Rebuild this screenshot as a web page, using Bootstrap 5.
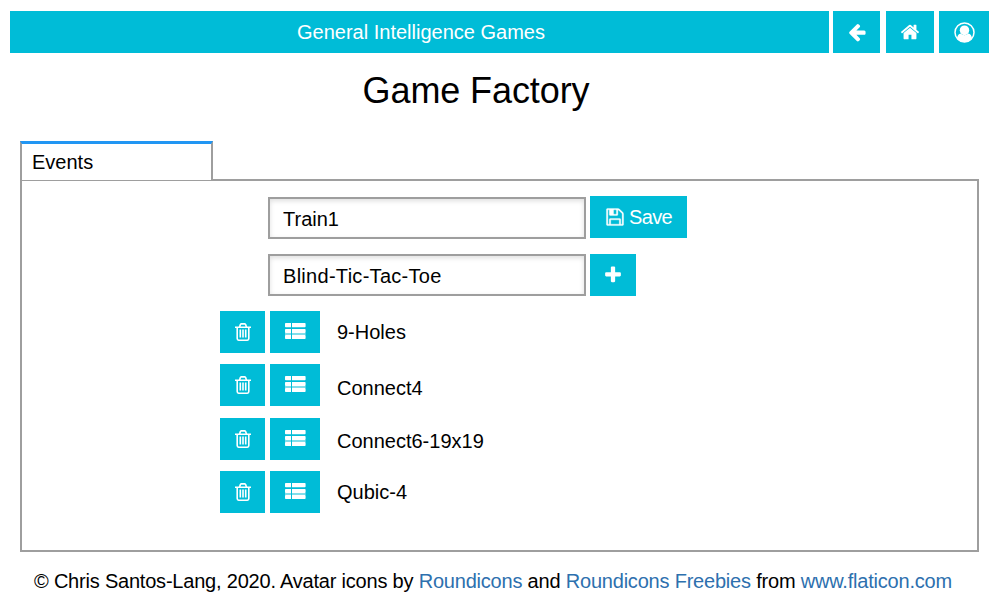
<!DOCTYPE html>
<html lang="en">
<head>
<meta charset="utf-8">
<meta name="viewport" content="width=device-width, initial-scale=1">
<title>Game Factory</title>
<link href="https://cdn.jsdelivr.net/npm/bootstrap@5.3.0/dist/css/bootstrap.min.css" rel="stylesheet">
<style>
body{font-family:"Liberation Sans",Arial,sans-serif;font-size:20px;line-height:30px;color:#000;background:#fff;height:606px;overflow:hidden}
a{color:#2d70ae;text-decoration:none}
svg{display:block;fill:#fff;flex:none}
.btn{--bs-btn-font-size:20px;--bs-btn-bg:#00bcd7;--bs-btn-color:#fff;--bs-btn-hover-bg:#00a5bd;--bs-btn-hover-color:#fff;--bs-btn-border-width:0;--bs-btn-border-radius:0;--bs-btn-padding-x:0;--bs-btn-padding-y:0;height:42px;line-height:42px;display:flex;align-items:center;justify-content:center;flex:none}
.topbar{padding:11px 9px 0 10px;height:53px}
.brand-strip{background:#00bcd7;color:#fff;width:819px;height:42px;line-height:42px;padding-left:3px;margin-right:4px}
.w-back{width:47px;margin-right:6px;padding-left:1px}.w-home{width:48px;margin-right:5px}.w-user{width:50px}
h1{font-size:36px;line-height:44px;width:952px;margin:16px 0 0;font-weight:400;letter-spacing:-.1px}
.events{margin:28px 19px 0 20px}
.nav-tabs{--bs-nav-tabs-border-width:0;height:38px}
.nav-tabs .nav-link{width:193px;padding:3px 0 0 10px;border:2px solid #9e9e9e;border-radius:0;line-height:30px;text-align:left}
.nav-tabs .nav-link.active{background:#fff;color:#000;border-color:#2196f3 #9e9e9e #9e9e9e;border-top-width:3px;border-bottom-width:1px;height:40px;margin-bottom:-2px;padding:0 0 1px 10px;position:relative}
.panel{border:2px solid #9e9e9e;height:373px;padding:15px 0 0 198px}
.field{width:318px;height:42px;border:2px solid #9e9e9e;border-radius:0;font-size:20px;line-height:36px;padding:2px 13px 0;color:#000;box-shadow:inset 0 2px 5px rgba(0,0,0,.13)}
.event-name{margin-top:1px;padding-top:3px}
.game-name{letter-spacing:.29px}
.entry{padding-left:48px;gap:4px;height:43px;margin-bottom:15px}
.entry.picker{margin-bottom:14px}
.w-save{width:97px;gap:4px;padding-left:0}
.w-save span{letter-spacing:-.7px}
.w-add{width:46px}
.game{height:42px;margin-bottom:11px}
.game.tall{margin-bottom:12px}
.game span{margin-left:17px;line-height:42px}
.drop-1{padding-top:3px}.drop-2{padding-top:2px}
.w-trash{width:45px;margin-right:5px}.w-list{width:50px}
.w-list svg{margin-bottom:2px}
footer{padding:14px 0 0 34px;white-space:nowrap;letter-spacing:-.205px}
</style>
<script src="https://cdn.jsdelivr.net/npm/bootstrap@5.3.0/dist/js/bootstrap.bundle.min.js"></script>
</head>
<body>
<svg width="0" height="0" class="d-none">
  <symbol id="trash" viewBox="0 0 16 18"><path fill="none" stroke="#fff" stroke-width="1.6" d="M0 4.200h16M4.500 4 5.300 1.800q.2-.9.900-.9h3.600q.7 0 .9.900L11.500 4M2.200 4v11.600q0 1.600 1.400 1.600h8.800q1.400 0 1.400-1.600V4M5.300 6.500v8M8 6.500v8M10.700 6.500v8"/></symbol>
  <symbol id="list" viewBox="0 0 21 16"><path d="M.8 0H6v4.300H.8Q0 4.300 0 3.500V.8Q0 0 .8 0zM7 0h12.800q.8 0 .8.8v2.700q0 .8-.8.8H7zM.8 6H6v4H.8Q0 10 0 9.200V6.800Q0 6 .8 6zM7 6h12.800q.8 0 .8.8v2.400q0 .8-.8.8H7zM.8 12H6v4H.8Q0 16 0 15.200v-2.400q0-.8.8-.8zM7 12h12.800q.8 0 .8.8v2.400q0 .8-.8.8H7z"/><path opacity=".5" d="M0 10h6v2H0zM7 10h13.600v2H7z"/></symbol>
</svg>

<header class="topbar d-flex">
  <div class="brand-strip text-center">General Intelligence Games</div>
  <button class="btn w-back" aria-label="Back"><svg width="20" height="20" viewBox="0 0 1792 1792"><path d="M1664 896v128q0 53-32.500 90.500t-84.500 37.500h-704l293 294q38 36 38 90t-38 90l-75 76q-37 37-90 37-52 0-91-37l-651-652q-37-37-37-90 0-52 37-91l651-650q38-38 91-38 52 0 90 38l75 74q38 38 38 91t-38 91l-293 293h704q52 0 84.500 37.500t32.500 90.500z"/></svg></button>
  <button class="btn w-home" aria-label="Home"><svg width="20" height="20" viewBox="0 0 1792 1792"><path d="M1472 992v480q0 26-19 45t-45 19h-384v-384h-256v384h-384q-26 0-45-19t-19-45v-480q0-1 .5-3t.5-3l575-474 575 474q1 2 1 6zm223-69l-62 74q-8 9-21 11h-3q-13 0-21-7l-692-577-692 577q-12 8-24 7-13-2-21-11l-62-74q-8-10-7-23.500t11-21.500l719-599q32-26 76-26t76 26l244 204v-195q0-14 9-23t23-9h192q14 0 23 9t9 23v408l219 182q10 8 11 21.500t-7 23.500z"/></svg></button>
  <button class="btn w-user" aria-label="Account"><svg width="21" height="21" viewBox="0 0 21 21"><circle cx="10.500" cy="10.500" r="9.500" fill="none" stroke="#fff" stroke-width="1.500"/><ellipse cx="10.500" cy="8.300" rx="4.700" ry="4.900"/><path d="M3 16.200q.5-4.300 3.700-4.800 3.800 3.600 7.600 0 3.200.5 3.700 4.800-2.900 3.900-7.500 3.900T3 16.200z"/></svg></button>
</header>

<h1 class="text-center">Game Factory</h1>

<main class="events">
  <ul class="nav nav-tabs"><li class="nav-item"><button class="nav-link active">Events</button></li></ul>
  <div class="panel">
    <div class="entry d-flex">
      <input class="form-control field event-name" value="Train1" aria-label="Event name">
      <button class="btn w-save"><svg width="20" height="20" viewBox="0 0 1792 1792"><path stroke="#fff" stroke-width="30" d="M512 1536h768v-384h-768v384zm896 0h128v-896q0-14-10-38.500t-20-34.500l-281-281q-10-10-34-20t-39-10v416q0 40-28 68t-68 28h-576q-40 0-68-28t-28-68v-416h-128v1280h128v-416q0-40 28-68t68-28h832q40 0 68 28t28 68v416zm-384-928v-320q0-13-9.500-22.500t-22.500-9.500h-192q-13 0-22.500 9.500t-9.500 22.500v320q0 13 9.500 22.500t22.500 9.500h192q13 0 22.500-9.500t9.500-22.500zm640 32v928q0 40-28 68t-68 28h-1344q-40 0-68-28t-28-68v-1344q0-40 28-68t68-28h928q40 0 88 20t76 48l280 280q28 28 48 76t20 88z"/></svg><span>Save</span></button>
    </div>
    <div class="entry picker d-flex">
      <input class="form-control field game-name" value="Blind-Tic-Tac-Toe" aria-label="Game">
      <button class="btn w-add" aria-label="Add"><svg width="20" height="20" viewBox="0 0 1792 1792"><path d="M1600 736v192q0 40-28 68t-68 28h-416v416q0 40-28 68t-68 28h-192q-40 0-68-28t-28-68v-416h-416q-40 0-68-28t-28-68v-192q0-40 28-68t68-28h416v-416q0-40 28-68t68-28h192q40 0 68 28t28 68v416h416q40 0 68 28t28 68z"/></svg></button>
    </div>
    <div class="game d-flex"><button class="btn w-trash" aria-label="Delete"><svg width="16" height="18"><use href="#trash"/></svg></button><button class="btn w-list" aria-label="Settings"><svg width="21" height="16"><use href="#list"/></svg></button><span>9-Holes</span></div>
    <div class="game tall d-flex"><button class="btn w-trash" aria-label="Delete"><svg width="16" height="18"><use href="#trash"/></svg></button><button class="btn w-list" aria-label="Settings"><svg width="21" height="16"><use href="#list"/></svg></button><span class="drop-1">Connect4</span></div>
    <div class="game d-flex"><button class="btn w-trash" aria-label="Delete"><svg width="16" height="18"><use href="#trash"/></svg></button><button class="btn w-list" aria-label="Settings"><svg width="21" height="16"><use href="#list"/></svg></button><span class="drop-2">Connect6-19x19</span></div>
    <div class="game d-flex"><button class="btn w-trash" aria-label="Delete"><svg width="16" height="18"><use href="#trash"/></svg></button><button class="btn w-list" aria-label="Settings"><svg width="21" height="16"><use href="#list"/></svg></button><span>Qubic-4</span></div>
  </div>
</main>
<footer>© Chris Santos-Lang, 2020. Avatar icons by <a href="#">Roundicons</a> and <a href="#">Roundicons Freebies</a> from <a href="#">www.flaticon.com</a></footer>
</body>
</html>
